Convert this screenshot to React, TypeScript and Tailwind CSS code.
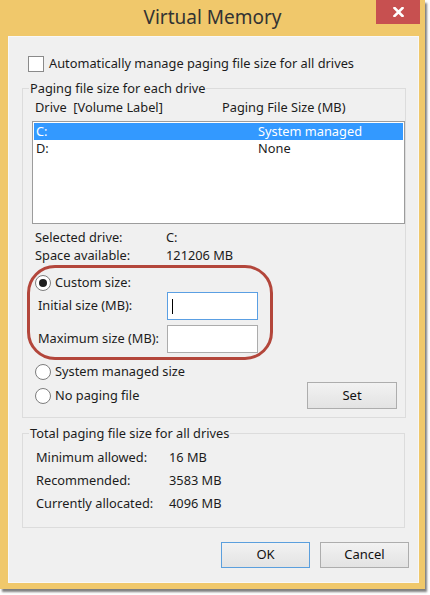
const font = "font-['Noto_Sans','Open_Sans','DejaVu_Sans',sans-serif]"

function Radio({ checked = false }: { checked?: boolean }) {
  return (
    <span className="w-[16px] h-[16px] rounded-full border border-[#7d7d7d] bg-white flex items-center justify-center shrink-0">
      {checked && <span className="w-[8px] h-[8px] rounded-full bg-[#1e1e1e]" />}
    </span>
  )
}

function Button({ label, primary = false, className = '' }: { label: string; primary?: boolean; className?: string }) {
  return (
    <button
      className={`h-full flex items-center justify-center border bg-gradient-to-b from-[#f2f2f2] to-[#e3e3e3] text-[13px] text-[#111] ${
        primary ? 'border-[#5b9fdd]' : 'border-[#adadad]'
      } ${className}`}
    >
      {label}
    </button>
  )
}

export default function App() {
  return (
    <div className={`w-[430px] h-[595px] bg-white overflow-hidden text-[12.8px] text-[#1c1c1c] ${font}`}>
      {/* Window frame */}
      <div className="w-[425px] h-[589px] bg-[#f0c86b] shadow-[2px_3px_2px_rgba(0,0,0,0.5)] flex flex-col">
        {/* Title bar */}
        <div className="h-[36px] grid grid-cols-[1fr_auto_1fr] items-start">
          <div />
          <div className="pt-[5px] leading-[24px] text-[19px] text-[#333]">Virtual Memory</div>
          <div className="flex justify-end pr-[5px]">
            <div className="w-[44px] h-[24px] bg-[#c75050] flex items-center justify-center">
              <svg width="11" height="10" viewBox="0 0 11 10">
                <path d="M1.5 1 L9.5 9 M9.5 1 L1.5 9" stroke="white" strokeWidth="2.6" strokeLinecap="square" />
              </svg>
            </div>
          </div>
        </div>

        {/* Client area */}
        <div className="ml-[8px] w-[411px] h-[547px] bg-[#f0f0f0] border border-[#f8f8f8] flex flex-col">
          <div className="mt-[17px] ml-[19px] h-[20px] flex items-center">
            <span className="w-[16px] h-[16px] border border-[#8a8a8a] bg-white" />
            <span className="ml-[5px]">Automatically manage paging file size for all drives</span>
          </div>

          {/* Paging file size for each drive */}
          <fieldset className="mt-[5px] ml-[13px] w-[383px] border border-[#dcdcdc] flex flex-col">
            <legend className="ml-[6px] px-[1px] leading-[18px]">Paging file size for each drive</legend>
            <div className="mt-[2px] ml-[12px] h-[18px] flex items-center">
              <span className="w-[187px]">Drive&nbsp; [Volume Label]</span>
              <span>Paging File Size (MB)</span>
            </div>

            <div className="mt-[4px] ml-[9px] w-[373px] h-[103px] border border-[#9c9c9c] bg-white p-[1px]">
              <div className="h-[17px] bg-[#3399ff] text-white flex items-center pl-[2px]">
                <span className="w-[222px]">C:</span>
                <span>System managed</span>
              </div>
              <div className="h-[17px] flex items-center pl-[2px]">
                <span className="w-[222px]">D:</span>
                <span>None</span>
              </div>
            </div>

            <div className="mt-[6px] ml-[12px] h-[16px] flex items-center">
              <span className="w-[131px]">Selected drive:</span>
              <span>C:</span>
            </div>
            <div className="mt-[2px] ml-[12px] h-[16px] flex items-center">
              <span className="w-[131px]">Space available:</span>
              <span>121206 MB</span>
            </div>

            {/* highlighted custom size block */}
            <div className="mt-[1px] ml-[4px] w-[246px] h-[95px] border-[3px] border-[#b3463b] rounded-[28px] flex flex-col">
              <div className="mt-[6px] pl-[5px] h-[18px] flex items-center">
                <Radio checked />
                <span className="ml-[4px]">Custom size:</span>
              </div>
              <div className="pl-[8px] h-[28px] flex items-center">
                <span className="w-[129px]">Initial size (MB):</span>
                <div className="w-[91px] h-[28px] border border-[#5a9fe3] bg-white flex items-center pl-[4px]">
                  <span className="w-[1px] h-[15px] bg-black" />
                </div>
              </div>
              <div className="mt-[5px] pl-[8px] h-[28px] flex items-center">
                <span className="w-[129px]">Maximum size (MB):</span>
                <div className="w-[91px] h-[28px] border border-[#acacac] bg-white" />
              </div>
            </div>

            <div className="mt-[3px] pl-[12px] h-[18px] flex items-center">
              <Radio />
              <span className="ml-[4px]">System managed size</span>
            </div>
            <div className="mt-[1px] mb-[8px] pl-[12px] pr-[8px] h-[27px] flex items-center justify-between">
              <div className="flex items-center">
                <Radio />
                <span className="ml-[4px]">No paging file</span>
              </div>
              <Button label="Set" className="w-[90px]" />
            </div>
          </fieldset>

          {/* Total paging file size */}
          <fieldset className="mt-[6px] ml-[13px] w-[383px] border border-[#dcdcdc] flex flex-col pb-[14px]">
            <legend className="ml-[6px] px-[1px] leading-[18px]">Total paging file size for all drives</legend>
            <div className="mt-[7px] ml-[13px] h-[18px] flex items-center">
              <span className="w-[133px]">Minimum allowed:</span>
              <span>16 MB</span>
            </div>
            <div className="mt-[5px] ml-[13px] h-[18px] flex items-center">
              <span className="w-[133px]">Recommended:</span>
              <span>3583 MB</span>
            </div>
            <div className="mt-[5px] ml-[13px] h-[18px] flex items-center">
              <span className="w-[133px]">Currently allocated:</span>
              <span>4096 MB</span>
            </div>
          </fieldset>

          <div className="mt-[14px] h-[26px] flex justify-end gap-[10px] pr-[9px]">
            <Button label="OK" primary className="w-[89px]" />
            <Button label="Cancel" className="w-[89px]" />
          </div>
        </div>
      </div>
    </div>
  )
}
